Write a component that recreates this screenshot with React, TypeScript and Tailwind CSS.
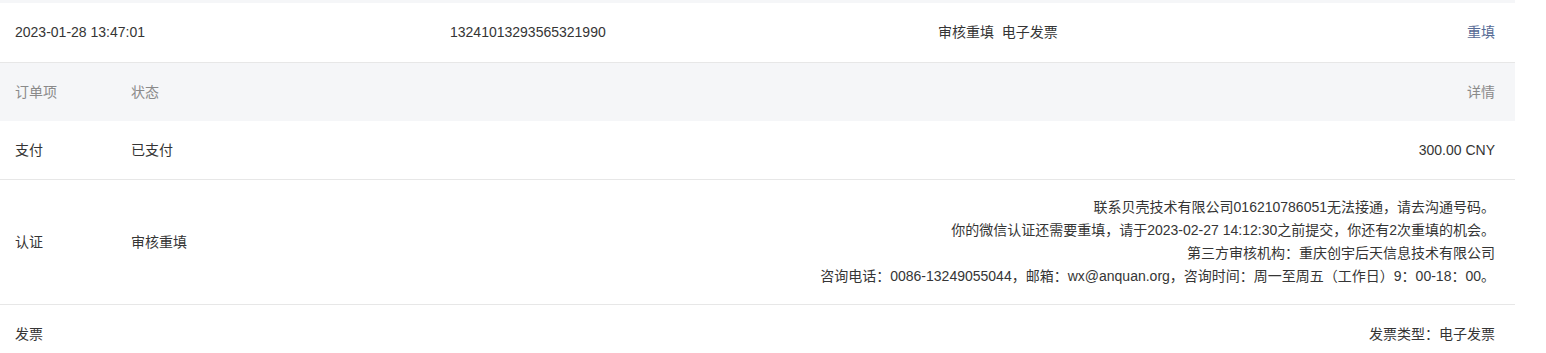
const font = { fontFamily: '"Liberation Sans", "Noto Sans CJK SC", sans-serif' };

function Row({ left, status, right, className = '' }: { left: string; status?: string; right: React.ReactNode; className?: string }) {
  return (
    <div className={`flex items-center pl-[15px] pr-[20px] border-b border-[#e7e7e7] ${className}`}>
      <div className="w-[116px] shrink-0">{left}</div>
      <div className="shrink-0">{status}</div>
      <div className="flex-1 text-right">{right}</div>
    </div>
  );
}

export default function App() {
  return (
    <div className="w-[1546px] bg-white text-[14px] text-[#353535]" style={font}>
      <div className="w-[1515px]">
        <div className="h-[3px] bg-[#f5f6f8]" />
        {/* order summary */}
        <div className="flex items-center h-[60px] pl-[15px] pr-[20px] border-b border-[#e7e7e7]">
          <div className="w-[435px] shrink-0">2023-01-28 13:47:01</div>
          <div className="w-[488px] shrink-0">13241013293565321990</div>
          <div className="flex-1">审核重填&nbsp;&nbsp;电子发票</div>
          <a className="text-[#576b95] cursor-pointer">重填</a>
        </div>
        {/* header */}
        <div className="flex items-center h-[58px] pl-[15px] pr-[20px] bg-[#f5f6f8] text-[#8a8a8a]">
          <div className="w-[116px] shrink-0">订单项</div>
          <div className="flex-1">状态</div>
          <div>详情</div>
        </div>
        <Row className="h-[59px]" left="支付" status="已支付" right="300.00 CNY" />
        <Row
          className="h-[125px]"
          left="认证"
          status="审核重填"
          right={
            <div className="leading-[23px]">
              <p>联系贝壳技术有限公司016210786051无法接通，请去沟通号码。</p>
              <p>你的微信认证还需要重填，请于2023-02-27 14:12:30之前提交，你还有2次重填的机会。</p>
              <p>第三方审核机构：重庆创宇后天信息技术有限公司</p>
              <p>咨询电话：0086-13249055044，邮箱：wx@anquan.org，咨询时间：周一至周五（工作日）9：00-18：00。</p>
            </div>
          }
        />
        <Row className="h-[59px] border-b-0" left="发票" right="发票类型：电子发票" />
      </div>
    </div>
  );
}
